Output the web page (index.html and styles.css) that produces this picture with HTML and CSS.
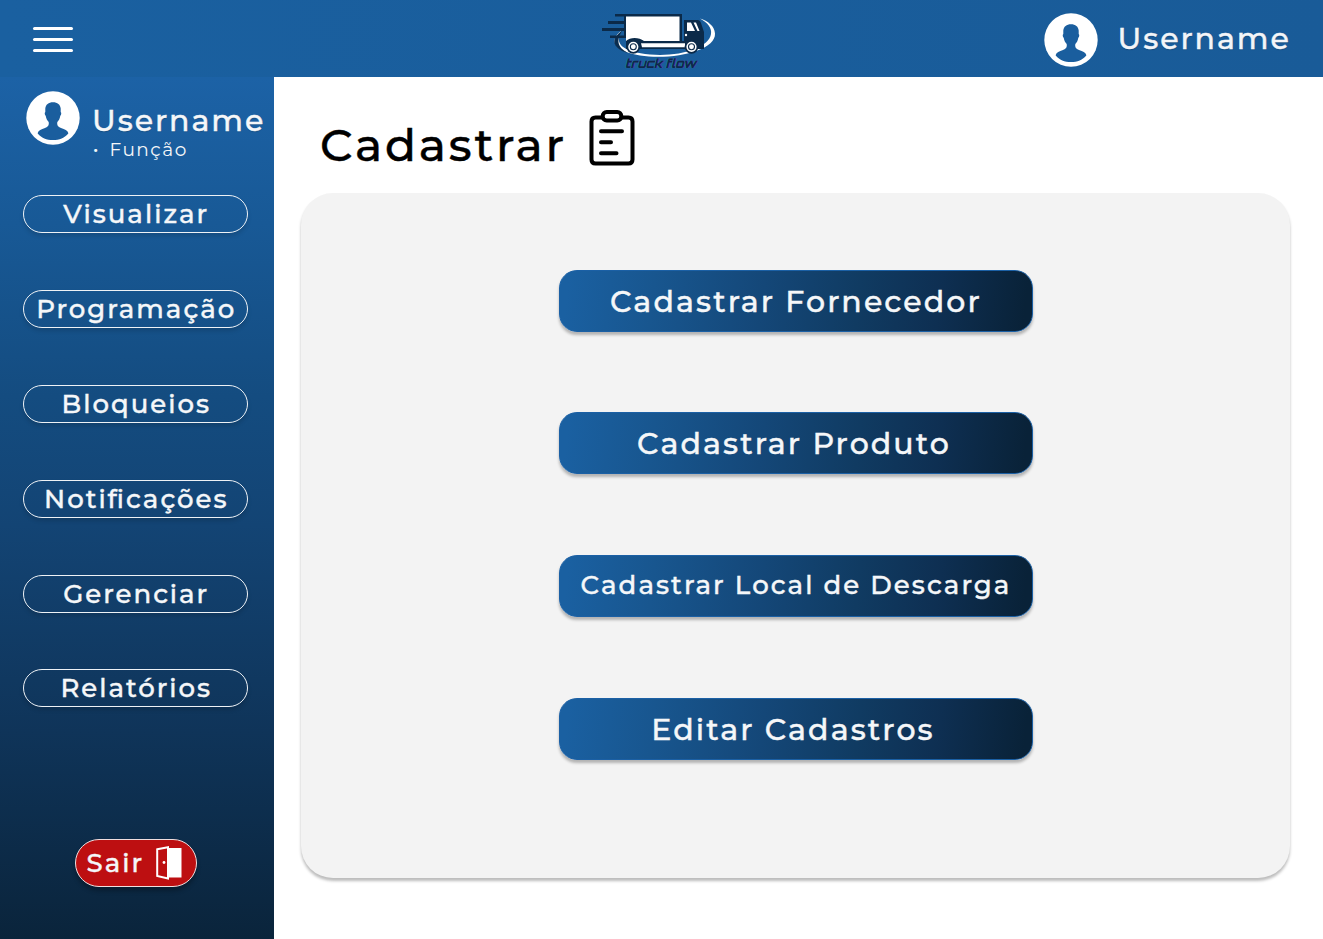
FILE: index.html
```html
<!DOCTYPE html>
<html lang="pt-BR">
<head>
<meta charset="utf-8">
<title>Cadastrar</title>
<link rel="stylesheet" href="styles.css">
</head>
<body>
<svg width="0" height="0" class="defs" aria-hidden="true">
  <symbol id="avatar" viewBox="0 0 54 54">
    <circle cx="27" cy="27" r="26.7" fill="#fff"/>
    <path class="person" d="M27 11.2C31.4 11.2 34.4 13.6 34.7 17.6V21C35.6 21.5 35.4 24.2 34.3 24.8C33.8 27.8 32.8 29.7 31.3 31C30.7 34.2 31.8 35.8 35 37C38.8 38.2 41.5 39.4 42.4 42.2C38.8 47 33.3 49 27 49S15.2 47 11.6 42.2C12.5 39.4 15.2 38.2 19 37C22.2 35.8 23.3 34.2 22.7 31C21.2 29.7 20.2 27.8 19.7 24.8C18.6 24.2 18.4 21.5 19.3 21V17.6C19.6 13.6 22.6 11.2 27 11.2Z"/>
  </symbol>
</svg>
<header class="topbar">
  <button class="burger" aria-label="Menu"><i></i><i></i><i></i></button>
  <svg class="logo" viewBox="0 0 140 76">
    <path d="M31 31C19 40 23 51 50 55.500C82 60.500 126 51 125 33.500C124.500 26 118 21 110 18.500C118 23 122 28 121 34C119 48 90 57 60 54.500C33 52 24 44 31 31Z" fill="#fff"/>
    <path d="M32 31C21 38 21 48 38 53C29 48 25 42 32 31Z" fill="#0b2e50"/>
    <path d="M25 14H92V41H94V20H107.500Q110 20 111 23L114 32V49H36V38H20V35.500H34V31H12V28H34V24H18V21H34V16.500H25Z" fill="#0b2a49"/>
    <path d="M36 16.500H89.500V41H54C49 37 40 37 36 41Z" fill="#fff"/>
    <path d="M51 43.300H95V47.200H52Z" fill="#fff"/>
    <path d="M97 22.500H101L105 31H97ZM103.500 22.500H106L109.500 31H107.500Z" fill="#fff"/>
    <circle cx="96" cy="35" r="1.200" fill="#fff"/>
    <g fill="#fff" stroke="#0b2a49">
      <circle cx="43.300" cy="46.800" r="6" stroke-width="1.800"/><circle cx="43.300" cy="46.800" r="3" stroke-width="1.100"/>
      <circle cx="101.500" cy="46.800" r="6" stroke-width="1.800"/><circle cx="101.500" cy="46.800" r="3" stroke-width="1.100"/>
    </g>
    <text class="logo-text" x="35" y="68" textLength="71" lengthAdjust="spacingAndGlyphs">truck flow</text>
  </svg>
  <div class="account">
    <svg class="avatar"><use href="#avatar"/></svg>
    <span class="username">Username</span>
  </div>
</header>
<div class="body">
  <aside class="sidebar">
    <div class="profile">
      <svg class="avatar"><use href="#avatar"/></svg>
      <div>
        <div class="username">Username</div>
        <div class="role"><span class="dot">·</span>Função</div>
      </div>
    </div>
    <nav class="menu">
      <a>Visualizar</a>
      <a>Programação</a>
      <a>Bloqueios</a>
      <a>Notificações</a>
      <a>Gerenciar</a>
      <a>Relatórios</a>
    </nav>
    <button class="exit"><span>Sair</span>
      <svg width="26" height="34" viewBox="0 0 26 34"><path d="M12 2H25.500V31.500H12Z" fill="#fff"/><path d="M1.200 3.300L12 1.300V32.500L1.200 30Z" fill="#bd0f11" stroke="#fff" stroke-width="2"/><circle cx="8" cy="16.500" r="1.400" fill="#fff"/></svg>
    </button>
  </aside>
  <main class="content">
    <h1 class="title"><span>Cadastrar</span>
      <svg width="46" height="58" viewBox="0 0.5 46 58" fill="none" stroke="#000" stroke-width="4" stroke-linecap="round" stroke-linejoin="round"><path d="M13.500 8H6.500Q2.500 8 2.500 12V50Q2.500 54 6.500 54H39.500Q43.500 54 43.500 50V12Q43.500 8 39.500 8H32.500"/><rect x="13.700" y="2.500" width="18.600" height="8.600" rx="4"/><path d="M12 21.700H33M12 32.700H22M12 43.700H27.500"/></svg>
    </h1>
    <section class="panel">
      <button class="action">Cadastrar Fornecedor</button>
      <button class="action produto">Cadastrar Produto</button>
      <button class="action long">Cadastrar Local de Descarga</button>
      <button class="action editar">Editar Cadastros</button>
    </section>
  </main>
</div>
</body>
</html>
```
FILE: styles.css
```css
* { box-sizing: border-box; }
body { margin: 0; width: 1323px; height: 939px; overflow: hidden; display: flex; flex-direction: column; background: #fff; font-family: Montserrat, Inter, sans-serif; font-weight: 500; }
button { font: inherit; color: inherit; padding: 0; border: 0; background: none; }
.defs { position: absolute; }
.person { fill: #1a5e9e; }
.topbar { flex: none; height: 76.500px; display: flex; align-items: flex-start; background: linear-gradient(90deg, #1a60a0, #195b98); color: #f3f5f8; }
.burger { margin: 27px 0 0 33px; width: 40px; display: flex; flex-direction: column; gap: 8px; }
.burger i { height: 3px; border-radius: 2px; background: #fff; }
.logo { width: 140px; height: 76px; margin-left: 517px; }
.logo-text { font: italic 700 12.500px Orbitron, "DejaVu Sans", sans-serif; fill: #10264a; text-shadow: -0.7px 0 #14819b, 0.7px 0 #5b2ba0; }
.account { display: flex; margin: 12.500px 0 0 314px; gap: 19.500px; }
.avatar { flex: none; width: 54px; height: 54px; }
.username { font-size: 30px; line-height: 36px; letter-spacing: 1.950px; -webkit-text-stroke: 0.400px; text-shadow: 0 1px 1px #0003; }
.account .username { margin-top: 8px; }
.body { flex: 1; display: flex; min-height: 0; }
.sidebar { width: 274px; display: flex; flex-direction: column; color: #f5f7f9; background: linear-gradient(180deg, #1c62a6 0%, #185996 17%, #144c80 37%, #134474 52%, #0f3459 76%, #0a243b 100%); }
.profile { display: flex; height: 118.500px; padding: 14.500px 0 0 26px; gap: 12px; }
.profile .username { margin-top: 12px; }
.role { font-size: 18.500px; font-weight: 400; line-height: 20px; letter-spacing: 1.500px; margin-top: 1px; }
.dot { font-weight: 600; display: inline-block; width: 17.500px; padding-left: 1px; letter-spacing: 0; }
.menu { display: flex; flex-direction: column; gap: 56.900px; padding-left: 23px; }
.menu a { width: 225px; height: 38px; border: 1px solid #eef2f6; border-radius: 19px; text-align: center; font-size: 26px; line-height: 36px; letter-spacing: 2px; padding-left: 1.500px; font-feature-settings: "liga" 1; -webkit-text-stroke: 0.400px; box-shadow: 0 3px 4px #0002; }
.exit { display: flex; align-items: center; width: 122px; height: 48px; margin: 131.500px 0 0 75px; padding-left: 10.500px; gap: 11.500px; border: 1px solid #f0dede; border-radius: 24px; background: #bd0f11; font-size: 26px; letter-spacing: 2px; -webkit-text-stroke: 0.400px; box-shadow: 0 4px 4px #0004; }
.content { flex: 1; padding: 33px 0 0 27px; }
.title { margin: 0 0 26px 19px; height: 57px; display: flex; font-size: 45.500px; line-height: 54px; letter-spacing: 2.800px; font-weight: 500; gap: 22.500px; }
.title span { margin-top: 8px; -webkit-text-stroke: 0.400px; }
.panel { width: 989px; height: 685px; padding-top: 77px; display: flex; flex-direction: column; align-items: center; gap: 80.700px; border-radius: 32px; background: #f3f3f3; box-shadow: 0 3px 3px #0004; }
.action { width: 474px; height: 62px; border: 1px solid #1b60a5; border-radius: 18px; color: #f5f7f9; font-size: 30px; letter-spacing: 2.100px; padding-left: 1px; padding-top: 1px; -webkit-text-stroke: 0.400px; background: linear-gradient(97deg, #1a60a1 2%, #18568f 20%, #144778 43%, #103b62 63%, #0e2f52 80%, #092238 98%); box-shadow: 0 3px 3px #0004; }
.produto { padding-right: 4px; }
.long { font-size: 26px; letter-spacing: 2.050px; padding-bottom: 3px; }
.editar { padding-right: 6px; }
```
